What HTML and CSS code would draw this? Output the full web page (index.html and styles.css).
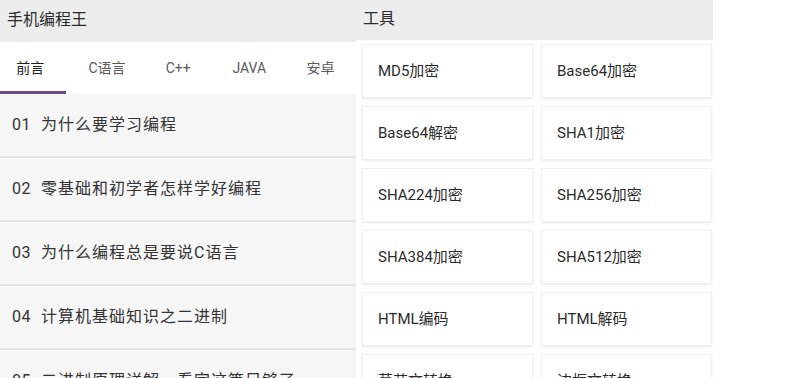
FILE: index.html
```html
<!DOCTYPE html>
<html lang="zh-CN">

<head>
    <meta charset="UTF-8">
    <title>手机编程王</title>
    <link rel="stylesheet" href="styles.css">
</head>

<body>
    <div class="page">
        <!-- 左边：文章列表 -->
        <div class="left">
            <div class="bar">手机编程王</div>
            <ul class="tabs">
                <li class="current">前言</li>
                <li>C语言</li>
                <li>C++</li>
                <li>JAVA</li>
                <li>安卓</li>
            </ul>
            <ul class="list">
                <li><span class="num">01</span>为什么要学习编程</li>
                <li><span class="num">02</span>零基础和初学者怎样学好编程</li>
                <li><span class="num">03</span>为什么编程总是要说C语言</li>
                <li><span class="num">04</span>计算机基础知识之二进制</li>
                <li><span class="num">05</span>二进制原理详解，看完这篇足够了</li>
            </ul>
        </div>

        <!-- 右边：工具 -->
        <div class="right">
            <div class="bar bar-small">工具</div>
            <ul class="tools">
                <li>MD5加密</li>
                <li>Base64加密</li>
                <li>Base64解密</li>
                <li>SHA1加密</li>
                <li>SHA224加密</li>
                <li>SHA256加密</li>
                <li>SHA384加密</li>
                <li>SHA512加密</li>
                <li>HTML编码</li>
                <li>HTML解码</li>
                <li>莫芷文转换</li>
                <li>边框文转换</li>
            </ul>
        </div>
    </div>
</body>

</html>
```

FILE: styles.css
```css
* {
    padding: 0;
    margin: 0;
    list-style: none;
    border: 0;
}

body {
    background: #fff;
    font-family: Roboto, "Noto Sans CJK SC", sans-serif;
    color: #333;
    overflow: hidden;
}

.page {
    display: flex;
    align-items: flex-start;
}

.left {
    width: 356px;
    background: #f6f6f6;
}

.right {
    width: 357px;
}

.bar {
    height: 42px;
    line-height: 40px;
    padding-left: 7px;
    background: #ececec;
    font-size: 16px;
    color: #2b2b2b;
}

.bar-small {
    height: 40px;
    line-height: 38px;
}

.tabs {
    display: flex;
    height: 52px;
    background: #fff;
}

.tabs li {
    width: 75px;
    text-align: center;
    line-height: 52px;
    font-size: 14px;
    color: #5a5a5a;
}

.tabs li.current {
    width: 70px;
    margin-right: 5px;
    color: #222;
    box-shadow: inset 0 -3px 0 #6b4a8c;
    text-indent: -6px;
}

.list li {
    height: 62px;
    line-height: 62px;
    padding-left: 12px;
    border-bottom: 2px solid #e4e4e4;
    font-size: 16px;
    letter-spacing: 1px;
    white-space: nowrap;
    overflow: hidden;
}

.list .num {
    margin-right: 10px;
    letter-spacing: 0.5px;
}

.tools {
    display: grid;
    grid-template-columns: 171px 171px;
    gap: 8px;
    padding: 4px 0 0 6px;
}

.tools li {
    height: 52px;
    line-height: 52px;
    padding-left: 15px;
    background: #fff;
    border: 1px solid #f0f0f0;
    box-shadow: 0 1px 2px rgba(0, 0, 0, 0.08);
    font-size: 15px;
    color: #2b2b2b;
}
```
